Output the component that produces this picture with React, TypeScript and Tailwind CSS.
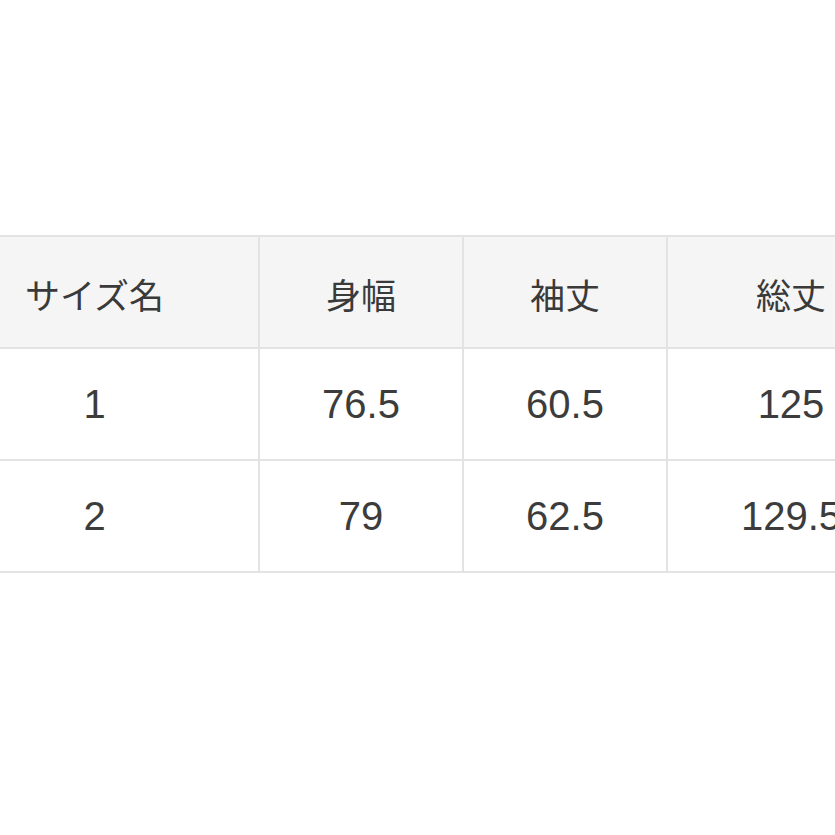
import React from "react";

const header = ["サイズ名", "身幅", "袖丈", "総丈"];
const rows = [
  ["1", "76.5", "60.5", "125"],
  ["2", "79", "62.5", "129.5"],
];

export default function App() {
  return (
    <div className="w-[835px] h-[835px] bg-white overflow-hidden pt-[235px]">
      <div className="ml-[-71px] w-max bg-[#e3e3e3] p-[2px]">
        <div className="grid grid-cols-[327px_202px_202px_246px] gap-[2px]">
          {header.map((h) => (
            <div
              key={h}
              className="h-[110px] bg-[#f5f5f5] flex items-center justify-center pt-[3px] text-[35px] text-[#3a3a3a] font-['Noto_Sans_CJK_JP',sans-serif] leading-none"
            >
              {h}
            </div>
          ))}
          {rows.map((r, i) =>
            r.map((c, j) => (
              <div
                key={`${i}-${j}`}
                className="h-[110px] bg-white flex items-center justify-center text-[40px] text-[#3c3c3c] font-['Liberation_Sans',Arial,sans-serif] leading-none"
              >
                {c}
              </div>
            ))
          )}
        </div>
      </div>
    </div>
  );
}
